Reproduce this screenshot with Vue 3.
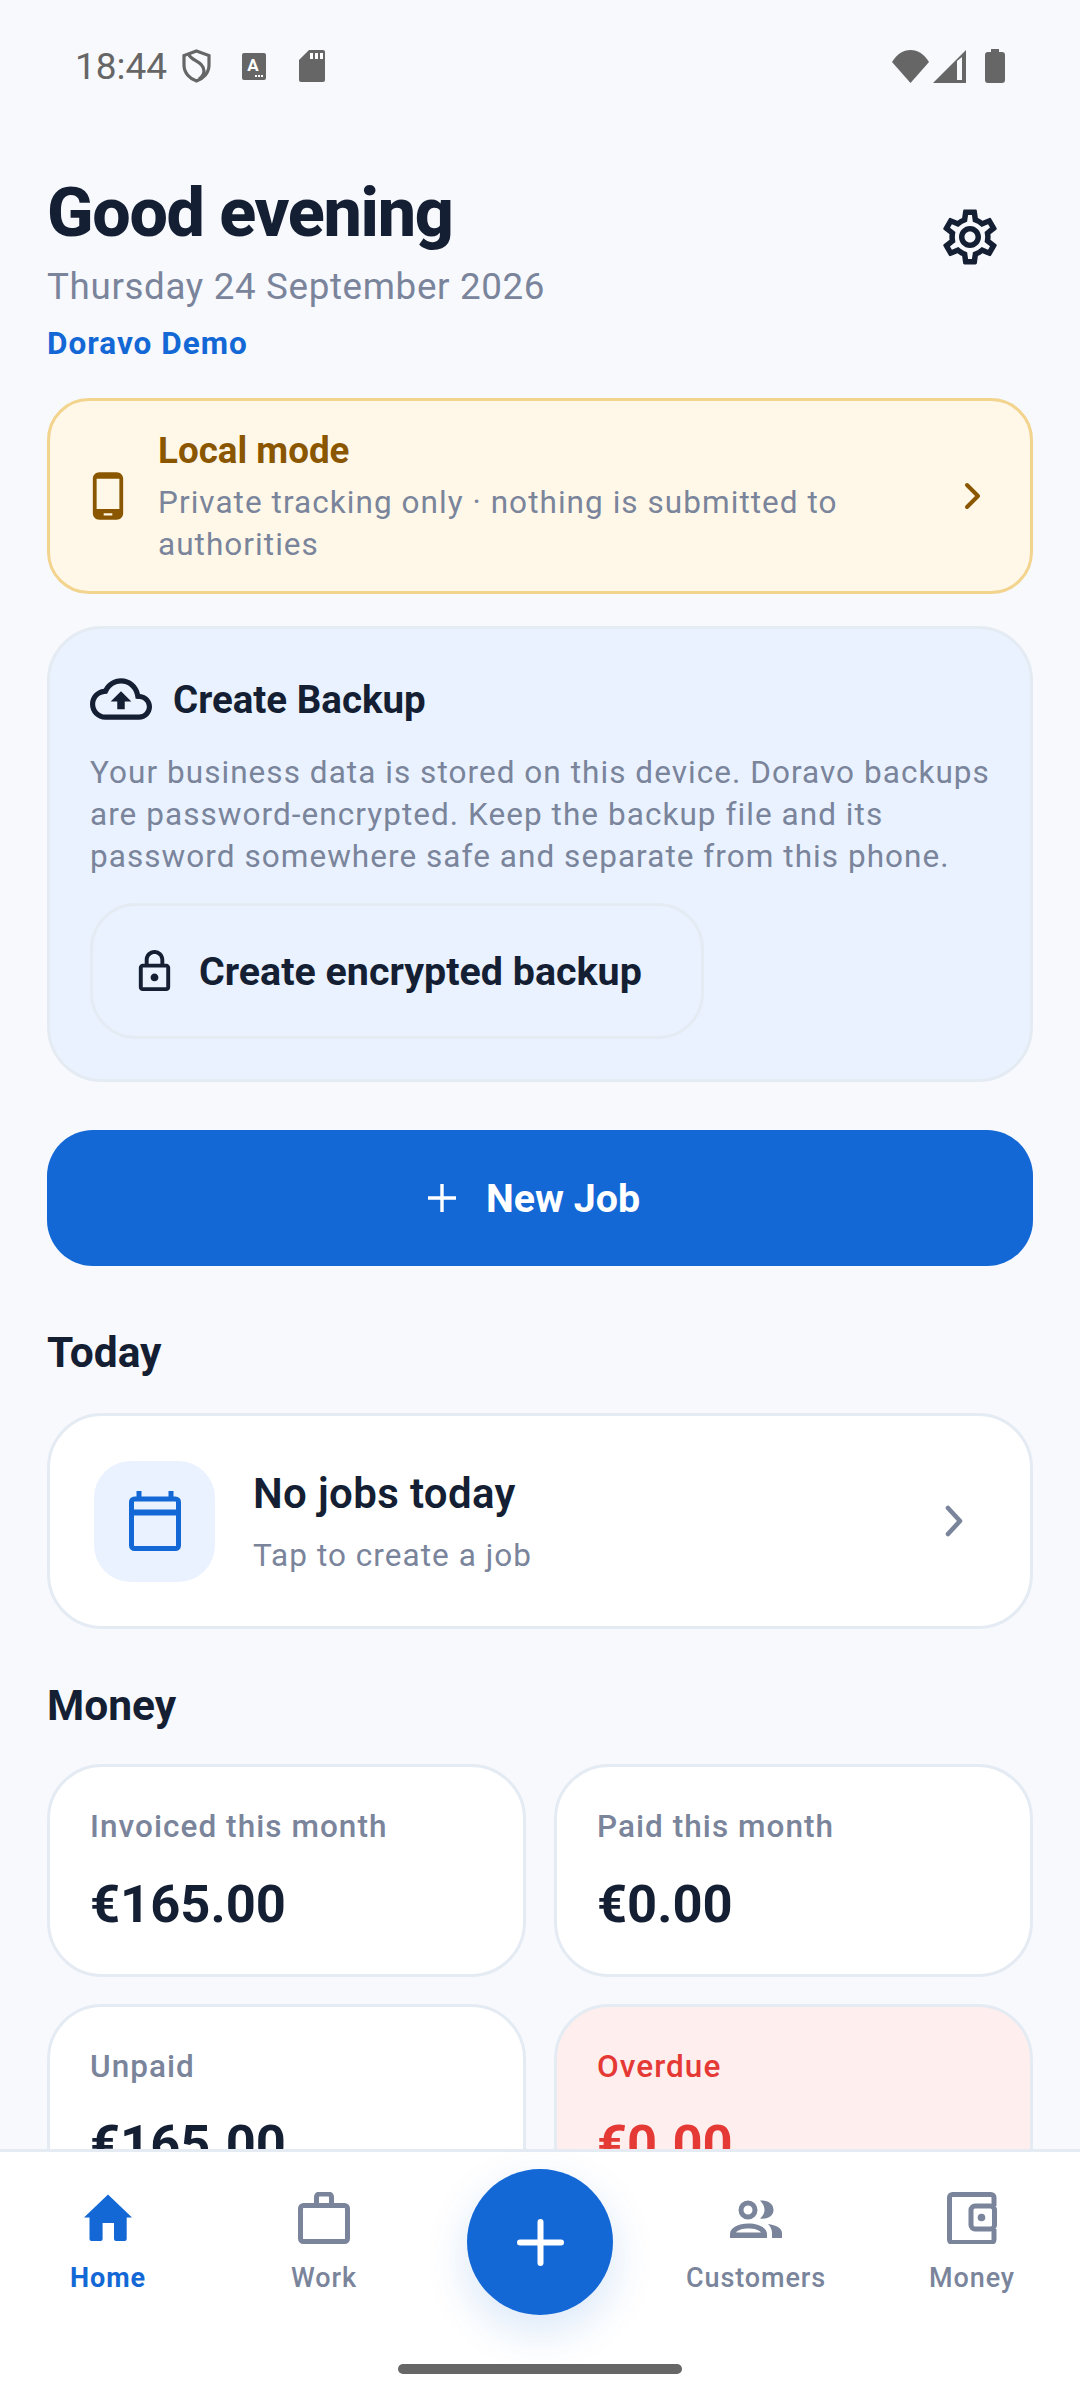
<template>
  <div class="screen">
    <div class="content">
      <div class="status-bar">
        <span class="clock">18:44</span>
        <svg class="st-shield" width="29" height="34" viewBox="0 0 29 34" fill="none" stroke="#666" stroke-width="3.2">
          <path d="M14.5 2 27 6.5V16c0 8-6 14-12.5 16C8 30 2 24 2 16V6.5Z" />
          <path d="M7 6c3 6 15 7 15 16 0 3-2 6-5 8" />
        </svg>
        <svg class="st-a" width="24" height="27" viewBox="0 0 24 27">
          <rect width="24" height="27" rx="2" fill="#666" />
          <text x="11" y="18" font-size="17" font-weight="700" fill="#fff" text-anchor="middle" font-family="Roboto, sans-serif">A</text>
          <rect x="13" y="22" width="2" height="2" fill="#fff" />
          <rect x="16" y="22" width="2" height="2" fill="#fff" />
          <rect x="19" y="22" width="2" height="2" fill="#fff" />
        </svg>
        <svg class="st-sd" width="26" height="32" viewBox="0 0 26 32">
          <path d="M10 0h14a2 2 0 0 1 2 2v28a2 2 0 0 1-2 2H2a2 2 0 0 1-2-2V10Z" fill="#666" />
          <rect x="11" y="3" width="3" height="6" fill="#fff" />
          <rect x="16" y="3" width="3" height="6" fill="#fff" />
          <rect x="21" y="3" width="3" height="6" fill="#fff" />
        </svg>
        <span class="st-space"></span>
        <svg width="39" height="33" viewBox="0 0 39 33">
          <path d="M1 12C6 4 12 0 19.5 0S33 4 38 12L19.5 33Z" fill="#666" />
        </svg>
        <svg class="st-signal" width="33" height="33" viewBox="0 0 33 33">
          <path d="M33 0v33H0Z" fill="#666" />
          <path d="M24 30V11l5-4v23Z" fill="#f7f9fd" />
        </svg>
        <svg class="st-battery" width="20" height="34" viewBox="0 0 20 34">
          <path d="M6 0h8v3h3a3 3 0 0 1 3 3v25a3 3 0 0 1-3 3H3a3 3 0 0 1-3-3V6a3 3 0 0 1 3-3h3Z" fill="#666" />
        </svg>
      </div>

      <main class="main">
        <header class="header">
          <div>
            <h1>Good evening</h1>
            <p class="date">Thursday 24 September 2026</p>
            <p class="org">Doravo Demo</p>
          </div>
          <svg class="gear" width="66" height="66" viewBox="0 0 24 24" fill="#151f33">
            <path d="M19.43 12.98c.04-.32.07-.64.07-.98 0-.34-.03-.66-.07-.98l2.11-1.65c.19-.15.24-.42.12-.64l-2-3.46c-.09-.16-.26-.25-.44-.25-.06 0-.12.01-.17.03l-2.49 1c-.52-.4-1.08-.73-1.69-.98l-.38-2.65C14.46 2.18 14.25 2 14 2h-4c-.25 0-.46.18-.49.42l-.38 2.65c-.61.25-1.17.59-1.69.98l-2.49-1c-.06-.02-.12-.03-.18-.03-.17 0-.34.09-.43.25l-2 3.46c-.13.22-.07.49.12.64l2.11 1.65c-.04.32-.07.65-.07.98 0 .33.03.66.07.98l-2.11 1.65c-.19.15-.24.42-.12.64l2 3.46c.09.16.26.25.44.25.06 0 .12-.01.17-.03l2.49-1c.52.4 1.08.73 1.69.98l.38 2.65c.03.24.24.42.49.42h4c.25 0 .46-.18.49-.42l.38-2.65c.61-.25 1.17-.59 1.69-.98l2.49 1c.06.02.12.03.18.03.17 0 .34-.09.43-.25l2-3.46c.12-.22.07-.49-.12-.64l-2.11-1.65zm-1.98-1.71c.04.31.05.52.05.73 0 .21-.02.43-.05.73l-.14 1.13.89.7 1.08.84-.7 1.21-1.27-.51-1.04-.42-.9.68c-.43.32-.84.56-1.25.73l-1.06.43-.16 1.13-.2 1.35h-1.4l-.19-1.35-.16-1.13-1.06-.43c-.43-.18-.83-.41-1.23-.71l-.91-.7-1.06.43-1.27.51-.7-1.21 1.08-.84.89-.7-.14-1.13c-.03-.31-.05-.54-.05-.74s.02-.43.05-.73l.14-1.13-.89-.7-1.08-.84.7-1.21 1.27.51 1.04.42.9-.68c.43-.32.84-.56 1.25-.73l1.06-.43.16-1.13.2-1.35h1.39l.19 1.35.16 1.13 1.06.43c.43.18.83.41 1.23.71l.91.7 1.06-.43 1.27-.51.7 1.21-1.07.85-.89.7.14 1.13zM12 8c-2.21 0-4 1.79-4 4s1.79 4 4 4 4-1.79 4-4-1.79-4-4-4zm0 6c-1.1 0-2-.9-2-2s.9-2 2-2 2 .9 2 2-.9 2-2 2z" />
          </svg>
        </header>

        <section class="local-card">
          <svg width="52" height="52" viewBox="0 0 24 24" fill="#8a5600">
            <path d="M16 1H8C6.34 1 5 2.34 5 4v16c0 1.66 1.34 3 3 3h8c1.66 0 3-1.34 3-3V4c0-1.66-1.34-3-3-3zm-2 20h-4v-1h4v1zm3.25-3H6.75V4h10.5v14z" />
          </svg>
          <div class="local-text">
            <div class="local-title">Local mode</div>
            <p class="muted-text">Private tracking only · nothing is submitted to authorities</p>
          </div>
          <svg width="40" height="40" viewBox="0 0 40 40" fill="none" stroke="#8a5600" stroke-width="4" stroke-linecap="round" stroke-linejoin="round">
            <path d="M15 9l11 11-11 11" />
          </svg>
        </section>

        <section class="backup-card">
          <div class="backup-head">
            <svg width="62" height="62" viewBox="0 0 24 24" fill="#151f33">
              <path d="M19.35 10.04C18.67 6.59 15.64 4 12 4 9.11 4 6.6 5.64 5.35 8.04 2.34 8.36 0 10.91 0 14c0 3.31 2.69 6 6 6h13c2.76 0 5-2.24 5-5 0-2.64-2.05-4.78-4.65-4.96zM19 18H6c-2.21 0-4-1.79-4-4 0-2.05 1.53-3.76 3.56-3.97l1.07-.11.5-.95C8.08 7.14 9.94 6 12 6c2.62 0 4.88 1.86 5.39 4.43l.3 1.5 1.53.11c1.56.1 2.78 1.41 2.78 2.96 0 1.65-1.35 3-3 3zM8 13h2.55v3h2.9v-3H16l-4-4z" />
            </svg>
            <span>Create Backup</span>
          </div>
          <p class="muted-text backup-desc">Your business data is stored on this device. Doravo backups are password-encrypted. Keep the backup file and its password somewhere safe and separate from this phone.</p>
          <button class="backup-btn">
            <svg width="47" height="47" viewBox="0 0 24 24" fill="#151f33">
              <path d="M18 8h-1V6c0-2.76-2.24-5-5-5S7 3.24 7 6v2H6c-1.1 0-2 .9-2 2v10c0 1.1.9 2 2 2h12c1.1 0 2-.9 2-2V10c0-1.1-.9-2-2-2zM9 6c0-1.66 1.34-3 3-3s3 1.34 3 3v2H9V6zm9 14H6V10h12v10zm-6-3c1.1 0 2-.9 2-2s-.9-2-2-2-2 .9-2 2 .9 2 2 2z" />
            </svg>
            Create encrypted backup
          </button>
        </section>

        <button class="new-job">
          <svg width="28" height="28" viewBox="0 0 28 28" stroke="#fff" stroke-width="3.4">
            <path d="M14 0v28M0 14h28" />
          </svg>
          New Job
        </button>

        <h2 class="today-title">Today</h2>
        <section class="today-card">
          <div class="cal-box">
            <svg width="52" height="60" viewBox="0 0 52 60" fill="none" stroke="#1368d6" stroke-width="5">
              <path d="M10 0v8M42 0v8" />
              <rect x="2.5" y="8" width="47" height="49.5" rx="3" />
              <path d="M2.5 21.5h47" stroke-width="6" />
            </svg>
          </div>
          <div class="today-text">
            <div class="today-head">No jobs today</div>
            <div class="muted-text">Tap to create a job</div>
          </div>
          <svg width="40" height="40" viewBox="0 0 40 40" fill="none" stroke="#7a849b" stroke-width="4.6" stroke-linecap="round" stroke-linejoin="round">
            <path d="M14 7l12 13-12 13" />
          </svg>
        </section>

        <h2 class="money-title">Money</h2>
        <div class="money-grid">
          <div v-for="m in stats" :key="m.label" class="stat" :class="{ overdue: m.overdue }">
            <div class="stat-label">{{ m.label }}</div>
            <div class="stat-value">{{ m.value }}</div>
          </div>
        </div>
      </main>
    </div>

    <nav class="bottom-nav">
      <div class="nav-item active">
        <svg width="48" height="52" viewBox="0 0 48 52">
          <path d="M24 2.5 48 25.500h-5.300V47a2 2 0 0 1-2 2H32a2 2 0 0 1-2-2V31H18.600v16a2 2 0 0 1-2 2H7.500a2 2 0 0 1-2-2V25.500H0Z" fill="#1368d6" />
        </svg>
        <span>Home</span>
      </div>
      <div class="nav-item">
        <svg width="52" height="52" viewBox="0 0 52 52" fill="none" stroke="#7a849b" stroke-width="5" stroke-linejoin="round">
          <rect x="2.5" y="13.5" width="47" height="36" rx="3" />
          <path d="M18.5 13.5V5a3 3 0 0 1 3-3h9a3 3 0 0 1 3 3v8.500" />
        </svg>
        <span>Work</span>
      </div>
      <div class="nav-item"></div>
      <div class="nav-item">
        <svg width="52" height="52" viewBox="0 0 52 52" fill="#7a849b">
          <circle cx="18" cy="18" r="7" fill="none" stroke="#7a849b" stroke-width="5" />
          <path d="M30 8.7C38 8 43.5 12 43.5 18S38 27.500 30 26.500C33 24 34.500 21 34.500 18S33 11 30 8.700Z" />
          <path d="M0 46v-4C0 36 8 31.500 18.500 31.500S37 36 37 42v4Zm6-5.500h25c-2-2.500-6.500-4-12.500-4S8 38 6 40.500Z" fill-rule="evenodd" />
          <path d="M38 32c8 1 14 4 14 9v5H42v-5c0-3.500-1.500-6.500-4-9Z" />
        </svg>
        <span>Customers</span>
      </div>
      <div class="nav-item">
        <svg width="50" height="52" viewBox="0 0 50 52" fill="none" stroke="#7a849b" stroke-width="5" stroke-linejoin="round">
          <path d="M47 14V5.500a3 3 0 0 0-3-3H5.500a3 3 0 0 0-3 3v42a3 3 0 0 0 3 3H44a3 3 0 0 0 3-3V37" />
          <rect x="24" y="14" width="23.500" height="23" rx="4" />
          <circle cx="34.500" cy="25.500" r="3.800" fill="#7a849b" stroke="none" />
        </svg>
        <span>Money</span>
      </div>
      <div class="fab">
        <svg width="47" height="47" viewBox="0 0 47 47" stroke="#fff" stroke-width="6" stroke-linecap="round">
          <path d="M23.500 3v41M3 23.500h41" />
        </svg>
      </div>
      <div class="home-bar"></div>
    </nav>
  </div>
</template>

<script setup>
const stats = [
  { label: 'Invoiced this month', value: '€165.00' },
  { label: 'Paid this month', value: '€0.00' },
  { label: 'Unpaid', value: '€165.00' },
  { label: 'Overdue', value: '€0.00', overdue: true }
]
</script>

<style>
body {
  margin: 0;
  background: #f7f9fd;
}
</style>

<style scoped>
.screen {
  position: relative;
  width: 1080px;
  height: 2400px;
  display: flex;
  flex-direction: column;
  overflow: hidden;
  background: #f7f9fd;
  font-family: Roboto, "Noto Sans", sans-serif;
  color: #151f33;
}

.content {
  flex: 1;
  min-height: 0;
  overflow: hidden;
}

.status-bar {
  height: 132px;
  display: flex;
  align-items: center;
  padding: 0 75px;
  box-sizing: border-box;
}

.clock {
  font-size: 37px;
  color: #666;
  width: 107px;
}

.st-a {
  margin-left: 31px;
}

.st-sd {
  margin-left: 33px;
}

.st-space {
  flex: 1;
}

.st-signal {
  margin-left: 3px;
}

.st-battery {
  margin-left: 19px;
}

.main {
  padding: 43px 47px 0;
}

.header {
  display: flex;
  justify-content: space-between;
  align-items: flex-start;
}

h1 {
  margin: 0;
  font-size: 68.25px;
  line-height: 76px;
  font-weight: 800;
  letter-spacing: -1.3px;
}

.date {
  margin: 11px 0 0;
  font-size: 36.75px;
  line-height: 50px;
  color: #7a849b;
  letter-spacing: 0.65px;
}

.org {
  margin: 12px 0 0;
  font-size: 31.5px;
  line-height: 40px;
  font-weight: 700;
  color: #1368d6;
  letter-spacing: 1px;
}

.gear {
  margin: 29px 30px 0 0;
}

.muted-text {
  margin: 0;
  font-size: 31.5px;
  line-height: 42px;
  color: #7a849b;
  letter-spacing: 1.05px;
}

.local-card {
  margin-top: 34px;
  height: 196px;
  box-sizing: border-box;
  display: flex;
  align-items: center;
  padding: 0 38px 0 32px;
  background: #fff8e8;
  border: 3px solid #f2d48f;
  border-radius: 42px;
}

.local-text {
  flex: 1;
  margin-left: 24px;
  padding-top: 5px;
}

.local-title {
  font-size: 36.75px;
  line-height: 40px;
  font-weight: 700;
  color: #8a5600;
  margin-bottom: 11px;
}

.backup-card {
  margin-top: 32px;
  height: 456px;
  box-sizing: border-box;
  padding: 48px 40px 0;
  background: #e9f2fe;
  border: 3px solid #e5ebf3;
  border-radius: 55px;
}

.backup-head {
  height: 44px;
  display: flex;
  align-items: center;
  gap: 21px;
  font-size: 38.5px;
  font-weight: 700;
}

.backup-desc {
  margin-top: 31px;
}

.backup-btn {
  margin-top: 25px;
  width: 614px;
  height: 136px;
  box-sizing: border-box;
  display: flex;
  align-items: center;
  gap: 21px;
  padding: 0 0 0 38px;
  background: #e9f2fe;
  border: 3px solid #e5ebf3;
  border-radius: 46px;
  font-family: inherit;
  font-size: 39.4px;
  font-weight: 700;
  color: #151f33;
}

.new-job {
  margin-top: 48px;
  width: 100%;
  height: 136px;
  display: flex;
  align-items: center;
  justify-content: center;
  gap: 30px;
  padding: 0 12px 0 0;
  border: none;
  border-radius: 46px;
  background: #1368d6;
  color: #fff;
  font-family: inherit;
  font-size: 39.4px;
  font-weight: 700;
}

h2 {
  margin: 0;
  font-size: 42.5px;
  line-height: 50px;
  font-weight: 700;
}

.today-title {
  margin-top: 62px;
}

.today-card {
  margin-top: 35px;
  height: 216px;
  box-sizing: border-box;
  display: flex;
  align-items: center;
  padding: 0 56px 0 44px;
  background: #fff;
  border: 3px solid #e5ebf3;
  border-radius: 55px;
}

.cal-box {
  width: 121px;
  height: 121px;
  border-radius: 37px;
  background: #e9f2fe;
  display: flex;
  align-items: center;
  justify-content: center;
}

.today-text {
  flex: 1;
  margin-left: 38px;
  padding-top: 3px;
}

.today-head {
  font-size: 42px;
  line-height: 52px;
  font-weight: 600;
  letter-spacing: 0.35px;
  margin-bottom: 15px;
}

.money-title {
  margin-top: 52px;
}

.money-grid {
  margin-top: 33px;
  display: grid;
  grid-template-columns: 1fr 1fr;
  gap: 27px 28px;
}

.stat {
  height: 213px;
  box-sizing: border-box;
  padding: 40px 40px 0;
  background: #fff;
  border: 3px solid #e5ebf3;
  border-radius: 55px;
}

.stat-label {
  font-size: 31.5px;
  line-height: 40px;
  font-weight: 500;
  color: #7a849b;
  letter-spacing: 1.05px;
}

.stat-value {
  margin-top: 25px;
  font-size: 52.5px;
  line-height: 64px;
  font-weight: 700;
}

.overdue {
  background: #feeeee;
}

.overdue .stat-label,
.overdue .stat-value {
  color: #e53935;
}

.bottom-nav {
  position: relative;
  height: 251px;
  flex-shrink: 0;
  box-sizing: border-box;
  display: grid;
  grid-template-columns: repeat(5, 1fr);
  align-items: start;
  padding-top: 40px;
  background: #fff;
  border-top: 3px solid #e5ebf3;
}

.nav-item {
  display: flex;
  flex-direction: column;
  align-items: center;
  gap: 16px;
  font-size: 27px;
  line-height: 36px;
  font-weight: 500;
  letter-spacing: 0.9px;
  color: #7a849b;
}

.nav-item.active {
  color: #1368d6;
  font-weight: 700;
}

.fab {
  position: absolute;
  left: 467px;
  top: 17px;
  width: 146px;
  height: 146px;
  border-radius: 50%;
  background: #1368d6;
  box-shadow: 0 16px 44px rgba(19, 104, 214, 0.16);
  display: flex;
  align-items: center;
  justify-content: center;
}

.home-bar {
  position: absolute;
  left: 398px;
  bottom: 26px;
  width: 284px;
  height: 10px;
  border-radius: 5px;
  background: #666;
}
</style>
